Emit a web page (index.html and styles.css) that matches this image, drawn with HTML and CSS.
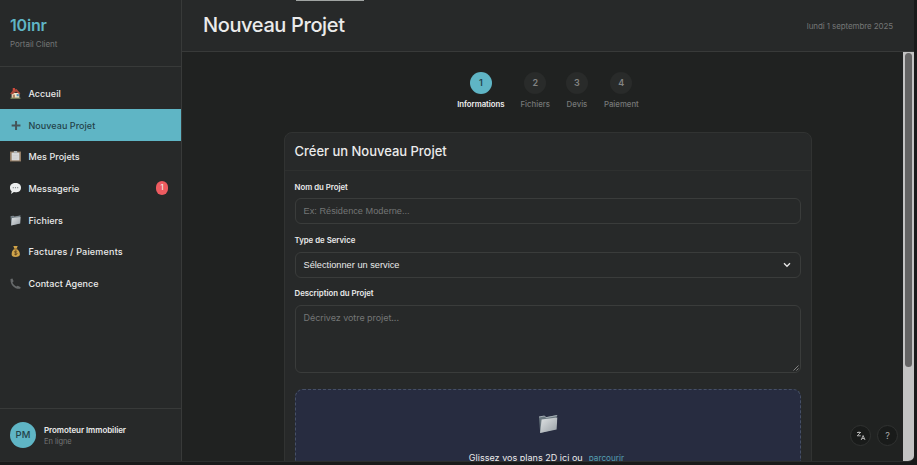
FILE: index.html
```html
<!DOCTYPE html>
<html lang="fr">
<head>
<meta charset="utf-8">
<title>10inr – Portail Client</title>
<link rel="stylesheet" href="styles.css">
</head>
<body>
<svg width="0" height="0" class="defs" aria-hidden="true">
  <defs>
    <linearGradient id="paper" x1="0" y1="0" x2="1" y2="1"><stop offset="0" stop-color="#e1e4e5"/><stop offset="1" stop-color="#969ea4"/></linearGradient>
    <symbol id="folder" viewBox="0 0 20 20"><path d="M1 3 6.5 2l1.3 1.3L18 1.3l1.2 1.2L18 4v11L2.2 19z" fill="#69767e"/><path d="M1 3 6.5 2 8 3.7 19.2 1.5" fill="none" stroke="#a5afb5"/><path d="M3.6 5.6 19.3 3.5 18.6 15.5 2.1 19z" fill="url(#paper)"/></symbol>
  </defs>
</svg>
<div class="app">
  <aside class="sidebar">
    <div class="brand"><div class="logo">10inr</div><div class="tagline">Portail Client</div></div>
    <nav class="nav">
      <a class="item"><svg class="ico" viewBox="0 0 20 20"><path d="M3 9h14v9H3z" fill="#f0e3c8"/><path d="M0 11 6 3l6-1 7 8-2 1.500-6-5-6 5z" fill="#a9493a"/><path d="M5 0h4v5H5z" fill="#d0493c"/><path d="M5 12h4v6H5z" fill="#b08060"/><path d="M12 11h4v4h-4z" fill="#4f91b5"/><path d="M1 17.500h18v2H1z" fill="#8d9464"/></svg><span>Accueil</span></a>
      <a class="item active"><svg class="ico" viewBox="0 0 20 20"><path d="M11 2v16M3 10h16" stroke="#45555a" stroke-width="3.6"/></svg><span>Nouveau Projet</span></a>
      <a class="item"><svg class="ico" viewBox="0 0 20 20"><path d="M0 1h20v18H0z" fill="#947d65"/><path d="M3 3h14v14H3z" fill="#d8d9da"/><path d="M7 0h6v4H7z" fill="#aeb4b6"/><path d="M5 8h10M5 11h10M5 14h8" stroke="#c8c8c8"/></svg><span>Mes Projets</span></a>
      <a class="item"><svg class="ico" viewBox="0 0 20 20"><path d="M10 0c6 0 10 3 10 8.500S16 17 10 17l-3-.5L2 20l1-5C1 13 0 11 0 8.500 0 3 4 0 10 0z" fill="#eceeee"/><g fill="#777d80"><circle cx="6" cy="8.500" r="1.100"/><circle cx="10" cy="8.500" r="1.100"/><circle cx="14" cy="8.500" r="1.100"/></g></svg><span>Messagerie</span><b class="badge">1</b></a>
      <a class="item"><svg class="ico"><use href="#folder"/></svg><span>Fichiers</span></a>
      <a class="item"><svg class="ico" viewBox="0 0 20 20"><path d="M6 0h8l-2 5c4 3 6 6 6 10 0 3-3 5-8 5s-7-2-7-5c0-4 1-7 5-10z" fill="#d0a44a"/><path d="M7 5.500h7" stroke="#765321" stroke-width="1.500"/><path d="M13 10c-2-1.500-5-1-5 .7 0 2 5 1.200 5 3.300 0 1.800-3.500 2-5.500.6M10.400 8.300v9" fill="none" stroke="#59401e" stroke-width="1.400"/></svg><span class="wide">Factures / Paiements</span></a>
      <a class="item"><svg class="ico" viewBox="0 0 20 20"><path d="M1 2 4.500 1l2 5-2 2c1 3 4 6 7 7.500l2.500-1.500 5.500 3-1 2.500C9 21 0 12 1 2z" fill="#66696a"/></svg><span>Contact Agence</span></a>
    </nav>
    <div class="user"><div class="avatar">PM</div><div><div class="name">Promoteur Immobilier</div><div class="status">En ligne</div></div></div>
  </aside>
  <main class="main">
    <header class="top"><h1>Nouveau Projet</h1><span class="date">lundi 1 septembre 2025</span></header>
    <div class="scroll">
      <div class="content">
        <div class="steps">
          <div class="step current"><i>1</i><span>Informations</span></div>
          <div class="step"><i>2</i><span>Fichiers</span></div>
          <div class="step"><i>3</i><span>Devis</span></div>
          <div class="step"><i>4</i><span>Paiement</span></div>
        </div>
        <section class="card">
          <h2>Créer un Nouveau Projet</h2>
          <div class="form">
            <label>Nom du Projet</label>
            <div class="field native muted"><span>Ex: Résidence Moderne...</span></div>
            <label>Type de Service</label>
            <div class="field native"><span>Sélectionner un service</span><svg class="chev" viewBox="0 0 8 6"><path d="m1 1.300 3 3 3-3" fill="none" stroke="#e8e8e8" stroke-width="1.300"/></svg></div>
            <label>Description du Projet</label>
            <div class="field area muted"><span>Décrivez votre projet...</span><svg class="grip" viewBox="0 0 6 6"><path d="M.5 5.500l5-5M3.500 5.500l2-2" stroke="#999" stroke-width=".8"/></svg></div>
            <div class="drop"><svg class="bigfolder"><use href="#folder"/></svg><p><span>Glissez vos plans 2D ici ou</span><a>parcourir</a></p></div>
          </div>
        </section>
      </div>
      <div class="bar"><div class="thumb"></div></div>
    </div>
  </main>
  <div class="tab"></div>
  <div class="tools">
    <div class="tool"><svg viewBox="0 0 10 10"><path d="M1 1.500h4M3 .5v1M4.600 1.500 1.200 4.800h3.600M5.200 9l1.900-4.500L9 9M5.900 7.500h2.500" fill="none" stroke="#b5b5b5" stroke-width=".95"/></svg></div>
    <div class="tool">?</div>
  </div>
</div>
</body>
</html>
```
FILE: styles.css
```css
* { box-sizing: border-box; }
body { margin: 0; height: 465px; overflow: hidden; background: #191a1a; font-family: Inter, "Liberation Sans", sans-serif; color: #ebebeb; }
span, label, a { white-space: nowrap; }
.defs { position: absolute; }
.app { position: relative; display: flex; width: 914px; height: 462px; overflow: hidden; background: #202221; border-bottom: 1px solid #2c2e2d; border-radius: 0 0 6px 0; }
.sidebar { width: 182px; flex: none; display: flex; flex-direction: column; background: #272929; border-right: 1px solid #383a39; }
.brand { height: 67px; padding: 15px 10px 0; border-bottom: 1px solid #383a39; }
.logo { font-size: 16px; line-height: 20px; font-weight: 600; color: #5fb5c5; letter-spacing: -.2px; }
.tagline { margin-top: 3px; font-size: 8px; line-height: 12px; color: #747676; letter-spacing: -.05px; }
.nav { padding-top: 10.500px; flex: 1; }
.item { height: 31.700px; padding: 0 13px 0 10px; display: flex; align-items: center; font-size: 9px; font-weight: 550; letter-spacing: .05px; }
.wide { letter-spacing: .2px; }
.ico { width: 11px; height: 11px; margin-right: 7.500px; flex: none; }
.active { background: #5fb5c5; color: #244249; }
.badge { width: 12px; height: 14px; margin-left: auto; border-radius: 7px; background: #ed5b60; font-size: 7.500px; line-height: 14px; text-align: center; font-weight: 500; }
.user { height: 53px; border-top: 1px solid #383a39; padding: 0 10px; display: flex; align-items: center; gap: 8px; }
.avatar { width: 26px; height: 26px; border-radius: 50%; background: #5fb5c5; color: #244249; font-size: 9.500px; line-height: 26px; text-align: center; font-weight: 500; }
.name { font-size: 8px; line-height: 12px; font-weight: 600; letter-spacing: -.07px; }
.status { font-size: 7.500px; line-height: 11px; color: #747676; letter-spacing: -.05px; }
.main { flex: 1; display: flex; flex-direction: column; min-width: 0; }
.top { height: 52px; flex: none; display: flex; align-items: center; justify-content: space-between; padding: 0 21px; background: #272929; border-bottom: 1px solid #383a39; }
h1 { margin: 0 0 1px; font-size: 20px; line-height: 28px; font-weight: 550; letter-spacing: -.38px; }
.date { font-size: 8px; color: #747676; letter-spacing: -.1px; }
.scroll { flex: 1; display: flex; min-height: 0; }
.content { flex: 1; overflow: hidden; padding: 20px 91.500px 0 101.500px; }
.steps { display: flex; justify-content: center; gap: 16px; height: 60px; padding-left: 1px; }
.step { display: flex; flex-direction: column; align-items: center; color: #777978; font-size: 7.800px; font-weight: 500; }
.step i { width: 22px; height: 22px; border-radius: 50%; background: #292b2a; text-align: center; font: 600 9px/22px Inter, sans-serif; color: #828483; }
.step span { margin-top: 5px; line-height: 11px; }
.current { color: #eee; font-weight: 600; letter-spacing: -.05px; }
.step.current i { background: #5fb5c5; color: #244249; }
.card { border: 1px solid #313332; border-radius: 8px; background: #272929; height: 400px; }
h2 { margin: 0; height: 37.500px; padding: 0 10px; border-bottom: 1px solid #2e302f; font-size: 13px; line-height: 36px; font-weight: 550; letter-spacing: -.02px; }
.form { padding: 10px; display: flex; flex-direction: column; align-items: stretch; }
label { align-self: flex-start; font-size: 7.800px; line-height: 12px; font-weight: 600; margin-bottom: 5.700px; }
.field { position: relative; display: flex; align-items: center; justify-content: space-between; height: 26px; padding: 0 9px 0 8px; margin-bottom: 9.800px; border: 1px solid #3a3c3b; border-radius: 6px; font-size: 9px; letter-spacing: -.05px; }
.native { font-family: "Liberation Sans", Arial, sans-serif; font-size: 9.200px; letter-spacing: .02px; }
.muted { color: #747676; }
.area { height: 68px; align-items: flex-start; padding-top: 6px; }
.chev { width: 8px; height: 6px; }
.grip { position: absolute; right: 1px; bottom: 1px; width: 6px; height: 6px; }
.drop { height: 130px; margin-top: 5.700px; border: 1px dashed #465066; border-radius: 8px; background: #272c40; display: flex; flex-direction: column; align-items: center; padding-top: 24px; }
.bigfolder { width: 20px; height: 20px; }
.drop p { display: flex; gap: 6px; margin: 18px 2px 0 0; font-size: 9px; line-height: 12px; letter-spacing: .02px; }
.drop a { color: #559fb1; font-size: 8.200px; }
.bar { width: 11px; background: #c3c3c3; padding: 1px 2px; }
.thumb { width: 7px; height: 314px; border-radius: 4px; background: #646464; }
.tab { position: absolute; left: 296px; top: 0; width: 68px; height: 1px; background: #a0a4a2; }
.tools { position: absolute; left: 850px; top: 425px; display: flex; gap: 6px; }
.tool { width: 21px; height: 21px; border: 1px solid #303231; border-radius: 50%; background: #191b1a; color: #aaa; display: flex; align-items: center; justify-content: center; font-size: 9px; }
.tool svg { width: 10px; height: 10px; }
```
